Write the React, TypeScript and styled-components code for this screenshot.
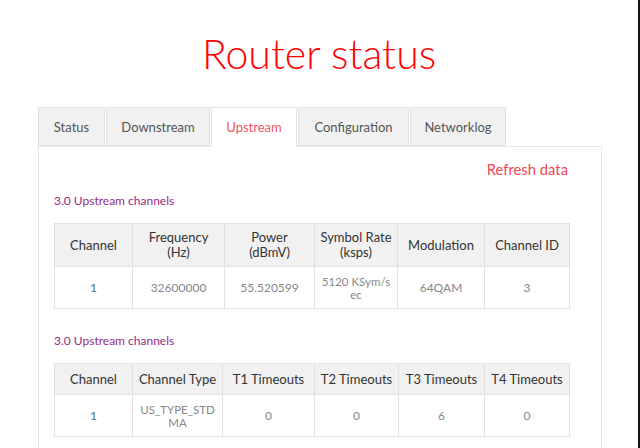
import styled, { createGlobalStyle } from "styled-components";

const GlobalStyle = createGlobalStyle`
  html, body {
    margin: 0;
    padding: 0;
    background: #fff;
  }
  body {
    font-family: Lato, "Liberation Sans", sans-serif;
  }
`;

type Tab = { label: string; width: number };

const tabs: Tab[] = [
  { label: "Status", width: 67 },
  { label: "Downstream", width: 104 },
  { label: "Upstream", width: 86 },
  { label: "Configuration", width: 111 },
  { label: "Networklog", width: 96 },
];

const upstreamCols = [78, 92, 90, 83, 87, 85];
const timeoutCols = [78, 90, 92, 84, 86, 85];

const App = () => {
  return (
    <Page>
      <GlobalStyle />
      <Title>Router status</Title>
      <TabRow>
        {tabs.map((t) => (
          <TabItem key={t.label} $active={t.label === "Upstream"} $w={t.width}>
            {t.label}
          </TabItem>
        ))}
      </TabRow>
      <Panel>
        <RefreshRow>
          <RefreshLink>Refresh data</RefreshLink>
        </RefreshRow>
        <SectionTitle>3.0 Upstream channels</SectionTitle>
        <Table>
          <colgroup>
            {upstreamCols.map((w, i) => (
              <col key={i} style={{ width: w }} />
            ))}
          </colgroup>
          <thead>
            <tr>
              <Th $h={42}>Channel</Th>
              <Th $h={42}>
                Frequency
                <br />
                (Hz)
              </Th>
              <Th $h={42}>
                Power
                <br />
                (dBmV)
              </Th>
              <Th $h={42}>
                Symbol Rate
                <br />
                (ksps)
              </Th>
              <Th $h={42}>Modulation</Th>
              <Th $h={42}>Channel ID</Th>
            </tr>
          </thead>
          <tbody>
            <tr>
              <Td $link>1</Td>
              <Td>32600000</Td>
              <Td>55.520599</Td>
              <Td $small>
                5120 KSym/s
                <br />
                ec
              </Td>
              <Td>64QAM</Td>
              <Td>3</Td>
            </tr>
          </tbody>
        </Table>
        <SectionTitle $second>3.0 Upstream channels</SectionTitle>
        <Table>
          <colgroup>
            {timeoutCols.map((w, i) => (
              <col key={i} style={{ width: w }} />
            ))}
          </colgroup>
          <thead>
            <tr>
              <Th $h={30}>Channel</Th>
              <Th $h={30}>Channel Type</Th>
              <Th $h={30}>T1 Timeouts</Th>
              <Th $h={30}>T2 Timeouts</Th>
              <Th $h={30}>T3 Timeouts</Th>
              <Th $h={30}>T4 Timeouts</Th>
            </tr>
          </thead>
          <tbody>
            <tr>
              <Td $link>1</Td>
              <Td $small>
                US_TYPE_STD
                <br />
                MA
              </Td>
              <Td>0</Td>
              <Td>0</Td>
              <Td>6</Td>
              <Td>0</Td>
            </tr>
          </tbody>
        </Table>
      </Panel>
    </Page>
  );
};

export default App;

const Page = styled.div`
  width: 638px;
  height: 448px;
  overflow: hidden;
  border-right: 2px solid #121212;
  background: #fff;
`;

const Title = styled.h1`
  margin: 0;
  height: 107px;
  box-sizing: border-box;
  padding-top: 29px;
  text-align: center;
  font-family: Lato, "Liberation Sans", sans-serif;
  font-weight: 300;
  font-size: 41px;
  line-height: 50px;
  color: #ff0000;
`;

const TabRow = styled.div`
  display: flex;
  gap: 1px;
  margin-left: 38px;
  height: 40px;
  position: relative;
  z-index: 1;
`;

const TabItem = styled.div<{ $active?: boolean; $w: number }>`
  width: ${(p) => p.$w}px;
  box-sizing: border-box;
  height: ${(p) => (p.$active ? 40 : 39)}px;
  display: flex;
  align-items: center;
  justify-content: center;
  padding-bottom: ${(p) => (p.$active ? 1 : 0)}px;
  border: 1px solid #e2e2e2;
  border-bottom: ${(p) => (p.$active ? "none" : "1px solid #e2e2e2")};
  background: ${(p) => (p.$active ? "#fff" : "#f1f1f1")};
  color: ${(p) => (p.$active ? "#f4555e" : "#555")};
  font-size: 13px;
`;

const Panel = styled.div`
  margin: -1px 36px 0 38px;
  border: 1px solid #e8e8e8;
  border-bottom: none;
  padding: 0 32px 0 15px;
  height: 320px;
`;

const RefreshRow = styled.div`
  display: flex;
  justify-content: flex-end;
  height: 46px;
  align-items: center;
`;

const RefreshLink = styled.a`
  color: #f4454f;
  font-size: 14.8px;
  margin-top: -2px;
  margin-right: 1px;
  cursor: pointer;
`;

const SectionTitle = styled.div<{ $second?: boolean }>`
  color: #962b82;
  font-size: 12px;
  height: ${(p) => (p.$second ? 54 : 30)}px;
  padding-top: ${(p) => (p.$second ? 24 : 0)}px;
  box-sizing: border-box;
  line-height: 16px;
`;

const Table = styled.table`
  width: 515px;
  border-collapse: collapse;
  table-layout: fixed;
`;

const Th = styled.th<{ $h: number }>`
  height: ${(p) => p.$h}px;
  padding: 0 2px;
  background: #f1f1f1;
  border: 1px solid #e2e2e2;
  color: #333;
  font-weight: 400;
  font-size: 13px;
  line-height: 15px;
  text-align: center;
  white-space: nowrap;
`;

const Td = styled.td<{ $link?: boolean; $small?: boolean }>`
  height: 41px;
  padding: 0 4px;
  border: 1px solid #e2e2e2;
  text-align: center;
  vertical-align: middle;
  color: ${(p) => (p.$link ? "#4a6f93" : "#888")};
  font-size: ${(p) => (p.$small ? 11.5 : 12)}px;
  line-height: ${(p) => (p.$small ? 13 : 16)}px;
`;
